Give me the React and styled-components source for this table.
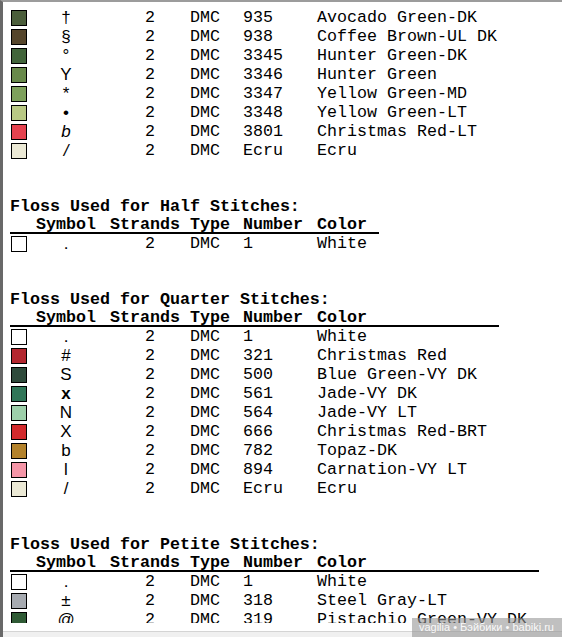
import React from "react";
import styled, { createGlobalStyle } from "styled-components";

const GlobalStyle = createGlobalStyle`
  html, body {
    margin: 0;
    padding: 0;
    background: #ffffff;
  }
  body {
    font-family: "Liberation Mono", "Courier New", monospace;
    color: #000;
  }
`;

const fullStitches = [
  { color: "#4b5e3b", sym: "†", num: "935", name: "Avocado Green-DK" },
  { color: "#55452b", sym: "§", num: "938", name: "Coffee Brown-UL DK" },
  { color: "#41643a", sym: "°", num: "3345", name: "Hunter Green-DK" },
  { color: "#68894a", sym: "Y", num: "3346", name: "Hunter Green" },
  { color: "#7ea15c", sym: "*", num: "3347", name: "Yellow Green-MD" },
  { color: "#b9c984", sym: "•", num: "3348", name: "Yellow Green-LT" },
  { color: "#e5424f", sym: "b", italic: true, num: "3801", name: "Christmas Red-LT" },
  { color: "#ebe9d5", sym: "/", italic: true, num: "Ecru", name: "Ecru" },
];

const halfStitches = [
  { color: "#ffffff", sym: ".", num: "1", name: "White" },
];

const quarterStitches = [
  { color: "#ffffff", sym: ".", num: "1", name: "White" },
  { color: "#b3272f", sym: "#", num: "321", name: "Christmas Red" },
  { color: "#2e4a3b", sym: "S", num: "500", name: "Blue Green-VY DK" },
  { color: "#307658", sym: "x", bold: true, num: "561", name: "Jade-VY DK" },
  { color: "#9dd0aa", sym: "N", num: "564", name: "Jade-VY LT" },
  { color: "#d2292c", sym: "X", num: "666", name: "Christmas Red-BRT" },
  { color: "#b3822b", sym: "b", num: "782", name: "Topaz-DK" },
  { color: "#f495a7", sym: "l", num: "894", name: "Carnation-VY LT" },
  { color: "#ebe9d5", sym: "/", num: "Ecru", name: "Ecru" },
];

const petiteStitches = [
  { color: "#ffffff", sym: ".", num: "1", name: "White" },
  { color: "#a7abb1", sym: "±", num: "318", name: "Steel Gray-LT" },
  { color: "#2f5a35", sym: "@", italic: true, num: "319", name: "Pistachio Green-VY DK" },
];

const Frame = styled.div`
  position: relative;
  width: 562px;
  height: 637px;
  box-sizing: border-box;
  border-left: 3px solid #686868;
  border-top: 2px solid #9c9c9c;
  display: flex;
  flex-direction: column;
  overflow: hidden;
`;

const Viewport = styled.div`
  height: 621px;
  flex: none;
  overflow: hidden;
  box-sizing: border-box;
  padding: 6px 0 0 7px;
  font-size: 16.6667px;
`;

const Spacer = styled.div`
  height: 8px;
  flex: none;
`;

const ScrollBar = styled.div`
  flex: 1;
  background: #f0f0f0;
  border-top: 1px solid #d4d4d4;
`;

const Section = styled.section`
  margin-top: ${(p) => (p.$first ? "0" : "36px")};
`;

const Title = styled.div`
  font-weight: bold;
  height: 16px;
  padding-top: 2px;
  line-height: 18px;
  white-space: pre;
`;

const Table = styled.div`
  display: grid;
  grid-template-columns: 26px 60px 84px 63px 74px max-content;
  width: max-content;
`;

const HeadCell = styled.div`
  font-weight: bold;
  line-height: 18px;
  height: 16px;
  padding-top: 2px;
  border-bottom: 2px solid #000;
  white-space: pre;
  overflow: hidden;
  text-align: ${(p) => p.$align || "left"};
  padding-left: ${(p) => p.$pl || 0}px;
  padding-right: ${(p) => p.$pr || 0}px;
`;

const Cell = styled.div`
  line-height: 19px;
  height: 19px;
  white-space: pre;
  text-align: ${(p) => p.$align || "left"};
  padding-left: ${(p) => p.$pl || 0}px;
  padding-right: ${(p) => p.$pr || 0}px;
`;

const SwatchCell = styled.div`
  height: 19px;
  display: flex;
  align-items: center;
  padding-left: 1px;
`;

const Swatch = styled.div`
  width: 14px;
  height: 14px;
  border: 1px solid #000;
  background: ${(p) => p.$color};
`;

const Symbol = styled.div`
  height: 19px;
  line-height: 19px;
  text-align: center;
  font-family: "Liberation Sans", Arial, sans-serif;
  font-size: 17px;
  font-style: ${(p) => (p.$italic ? "italic" : "normal")};
  font-weight: ${(p) => (p.$bold ? "bold" : "normal")};
`;

const Watermark = styled.div`
  position: absolute;
  right: 0;
  bottom: 0;
  height: 19px;
  box-sizing: border-box;
  padding: 0 8px 0 7px;
  background: rgba(150, 150, 150, 0.6);
  color: rgba(255, 255, 255, 0.92);
  font-family: "Liberation Sans", Arial, sans-serif;
  font-size: 11px;
  line-height: 19px;
  white-space: nowrap;
`;

function FlossRows({ rows }) {
  return rows.map((r, i) => (
    <React.Fragment key={i}>
      <SwatchCell>
        <Swatch $color={r.color} />
      </SwatchCell>
      <Symbol $italic={r.italic} $bold={r.bold}>
        {r.sym}
      </Symbol>
      <Cell $align="right" $pr={25}>
        2
      </Cell>
      <Cell $pl={10}>DMC</Cell>
      <Cell>{r.num}</Cell>
      <Cell $pr={12}>{r.name}</Cell>
    </React.Fragment>
  ));
}

function FlossTable({ title, rows }) {
  return (
    <Section>
      <Title>{title}</Title>
      <Table>
        <HeadCell />
        <HeadCell $align="center">Symbol</HeadCell>
        <HeadCell $align="right">Strands</HeadCell>
        <HeadCell $pl={10}>Type</HeadCell>
        <HeadCell>Number</HeadCell>
        <HeadCell $pr={12}>Color</HeadCell>
        <FlossRows rows={rows} />
      </Table>
    </Section>
  );
}

export default function App() {
  return (
    <>
      <GlobalStyle />
      <Frame>
        <Viewport>
          <Section $first>
            <Table>
              <FlossRows rows={fullStitches} />
            </Table>
          </Section>
          <FlossTable title="Floss Used for Half Stitches:" rows={halfStitches} />
          <FlossTable title="Floss Used for Quarter Stitches:" rows={quarterStitches} />
          <FlossTable title="Floss Used for Petite Stitches:" rows={petiteStitches} />
        </Viewport>
        <Spacer />
        <ScrollBar />
        <Watermark>vagilia • Бэйбики • babiki.ru</Watermark>
      </Frame>
    </>
  );
}
